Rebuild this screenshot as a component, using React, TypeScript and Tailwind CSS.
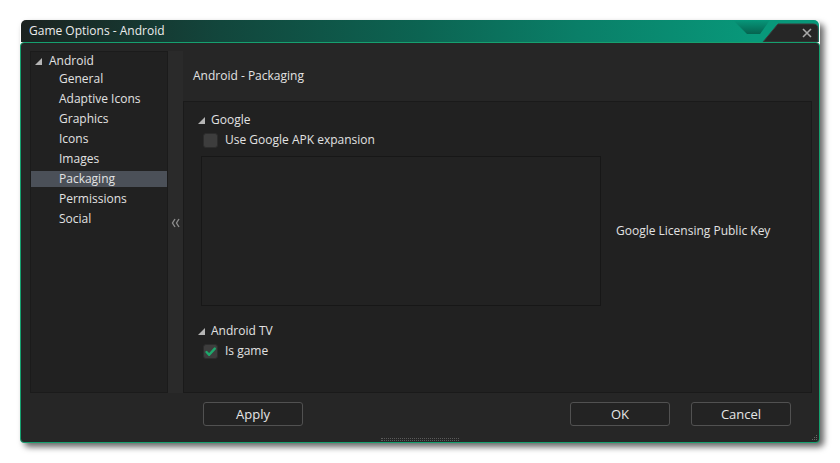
import React from "react";

const font = { fontFamily: '"Open Sans", "Noto Sans", sans-serif' };

const treeItems = ["General", "Adaptive Icons", "Graphics", "Icons", "Images", "Packaging", "Permissions", "Social"];

function Corner() {
  return (
    <svg width="7" height="7" viewBox="0 0 7 7" className="shrink-0">
      <polygon points="7,0 7,7 0,7" fill="#b5b5b5" />
    </svg>
  );
}

function Check({ checked }: { checked?: boolean }) {
  return (
    <div className="w-[15px] h-[15px] rounded-[3px] bg-[#3d3d3d] border border-[#2c2c2c] flex items-center justify-center shrink-0">
      {checked && (
        <svg width="13" height="13" viewBox="0 0 13 13">
          <path d="M2.5 7 L5.2 9.8 L10.8 3.6" stroke="#1ea86c" strokeWidth="2.4" fill="none" strokeLinecap="round" strokeLinejoin="round" />
        </svg>
      )}
    </div>
  );
}

function Button({ label }: { label: string }) {
  return (
    <button className="w-[100px] h-[24px] rounded-[3px] border border-[#515151] bg-[#232323] text-[13px] text-[#e6e6e6] leading-none">
      {label}
    </button>
  );
}

export default function App() {
  return (
    <div className="w-[840px] h-[463px] bg-white pt-[20px] pl-[20px] overflow-hidden" style={font}>
      <div className="w-[800px] relative shadow-[4px_4px_6px_rgba(0,0,0,0.6)] rounded-[5px]">
        {/* Title bar */}
        <div className="relative h-[22px] ml-[1px] w-[798px] rounded-t-[5px] bg-[linear-gradient(to_right,#1c2220_0%,#12463c_25%,#0c6452_50%,#0a7f68_70%,#08987a_92%)] flex items-center">
          <span className="pl-[8px] text-[12px] text-[#ececec] leading-none">Game Options - Android</span>
          <svg className="absolute left-0 top-0" width="798" height="22" viewBox="0 0 798 22">
            <defs>
              <linearGradient id="notch" x1="0" y1="0" x2="0" y2="1">
                <stop offset="0" stopColor="#07977a" />
                <stop offset="1" stopColor="#05634f" />
              </linearGradient>
            </defs>
            <polygon points="712,0 749,0 739,14 726,14" fill="url(#notch)" />
            <path d="M742 22 L757 4 L792 4 Q797 4 797 9 L797 22 Z" fill="#262626" stroke="#3a3a3a" strokeWidth="1" />
            <path d="M782 9 L790 17 M790 9 L782 17" stroke="#a9a9a9" strokeWidth="1.6" />
          </svg>
        </div>

        {/* Body */}
        <div className="h-[401px] border border-[#16a06f] rounded-[4px] bg-[#262626] flex flex-col relative">
          <div className="flex h-[342px] mt-[8px] pl-[9px] pr-[7px]">
            {/* tree */}
            <div className="w-[138px] bg-[#212121] border border-[#1b1b1b] pt-[1px] text-[12px] text-[#e2e2e2]">
              <div className="h-[16px] flex items-center pl-[4px] gap-[7px]">
                <Corner />
                <span>Android</span>
              </div>
              <div className="mt-[2px] flex flex-col gap-[4px]">
                {treeItems.map((t) => (
                  <div
                    key={t}
                    className={`h-[16px] flex items-center pl-[28px] ${t === "Packaging" ? "bg-[#4b5058]" : ""}`}
                  >
                    {t}
                  </div>
                ))}
              </div>
            </div>

            {/* splitter */}
            <div className="w-[15px] bg-[#2a2a2a] flex items-center justify-center pt-[2px]">
              <svg width="9" height="10" viewBox="0 0 9 10">
                <path d="M4 1 L1.5 5 L4 9 M8 1 L5.5 5 L8 9" stroke="#8c8c8c" strokeWidth="1.4" fill="none" />
              </svg>
            </div>

            {/* content */}
            <div className="flex-1 flex flex-col">
              <div className="h-[50px] flex items-center pl-[10px] text-[12px] text-[#e2e2e2]">Android - Packaging</div>
              <div className="flex-1 bg-[#212121] border border-[#1a1a1a] text-[12px] text-[#e2e2e2] pl-[14px] pt-[10px]">
                <div className="h-[16px] flex items-center gap-[6px]">
                  <Corner />
                  <span>Google</span>
                </div>
                <div className="h-[16px] mt-[4px] ml-[5px] flex items-center gap-[7px]">
                  <Check />
                  <span>Use Google APK expansion</span>
                </div>
                <div className="mt-[8px] ml-[3px] flex items-center gap-[15px]">
                  <div className="w-[400px] h-[150px] border border-[#171717] bg-[#222222]" />
                  <span>Google Licensing Public Key</span>
                </div>
                <div className="h-[16px] mt-[17px] flex items-center gap-[6px]">
                  <Corner />
                  <span>Android TV</span>
                </div>
                <div className="h-[16px] mt-[4px] ml-[5px] flex items-center gap-[7px]">
                  <Check checked />
                  <span>Is game</span>
                </div>
              </div>
            </div>
          </div>

          {/* buttons */}
          <div className="flex items-center mt-[9px] pl-[182px] pr-[28px]">
            <Button label="Apply" />
            <div className="flex-1" />
            <div className="flex gap-[21px]">
              <Button label="OK" />
              <Button label="Cancel" />
            </div>
          </div>

          <div className="absolute left-[360px] bottom-[1px] w-[78px] h-[3px] border-t border-b border-dotted border-[#5a5a5a]" />
          <svg className="absolute right-[1px] bottom-[1px]" width="7" height="7" viewBox="0 0 7 7">
            <rect x="5" y="1" width="1" height="1" fill="#666" />
            <rect x="3" y="3" width="1" height="1" fill="#666" />
            <rect x="5" y="3" width="1" height="1" fill="#666" />
            <rect x="1" y="5" width="1" height="1" fill="#666" />
            <rect x="3" y="5" width="1" height="1" fill="#666" />
            <rect x="5" y="5" width="1" height="1" fill="#666" />
          </svg>
        </div>
      </div>
    </div>
  );
}
